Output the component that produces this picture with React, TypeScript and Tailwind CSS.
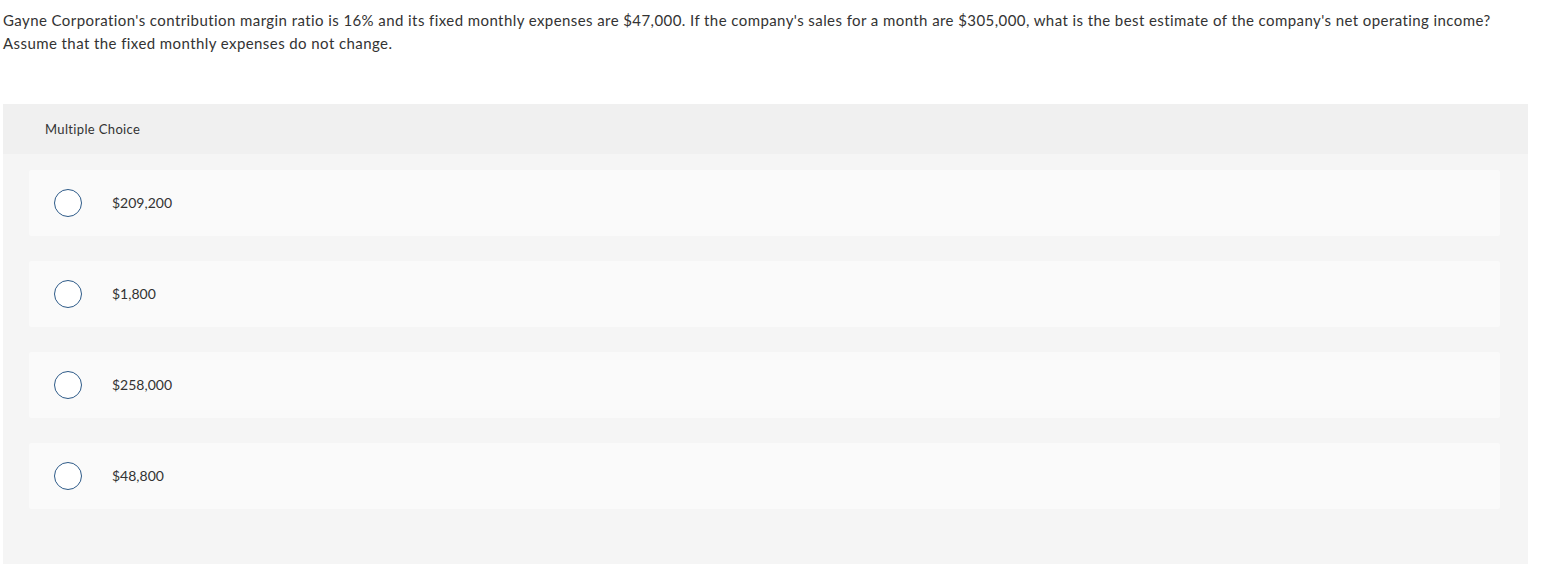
const options = ['$209,200', '$1,800', '$258,000', '$48,800'];

export default function App() {
  return (
    <div className="w-[1551px] h-[586px] bg-white text-[#333] font-['Lato','Open_Sans',sans-serif]">
      <div className="px-[3px] pt-[9px] text-[15px] leading-[23px] tracking-[0.42px]">
        <p>
          Gayne Corporation's contribution margin ratio is 16% and its fixed monthly expenses are $47,000. If the company's sales for a month are $305,000, what is the best estimate of the company's net operating income?
        </p>
        <p>Assume that the fixed monthly expenses do not change.</p>
      </div>

      <div className="ml-[3px] mt-[49px] w-[1525px] bg-[#f5f5f5] pb-[55px]">
        <div className="h-[50px] bg-[#f0f0f0] pl-[42px] pt-[1px] flex items-center text-[13px] tracking-[0.35px]">
          Multiple Choice
        </div>
        <div className="pt-[16px] pl-[26px] pr-[28px] flex flex-col gap-[25px]">
          {options.map((opt) => (
            <div key={opt} className="h-[66px] bg-[#fafafa] rounded-[2px] flex items-center pl-[25px]">
              <span className="w-[28px] h-[28px] rounded-full border border-[#2d5a88] bg-white shrink-0" />
              <span className="ml-[30px] text-[14px] -mt-[1px]">{opt}</span>
            </div>
          ))}
        </div>
      </div>
    </div>
  );
}
